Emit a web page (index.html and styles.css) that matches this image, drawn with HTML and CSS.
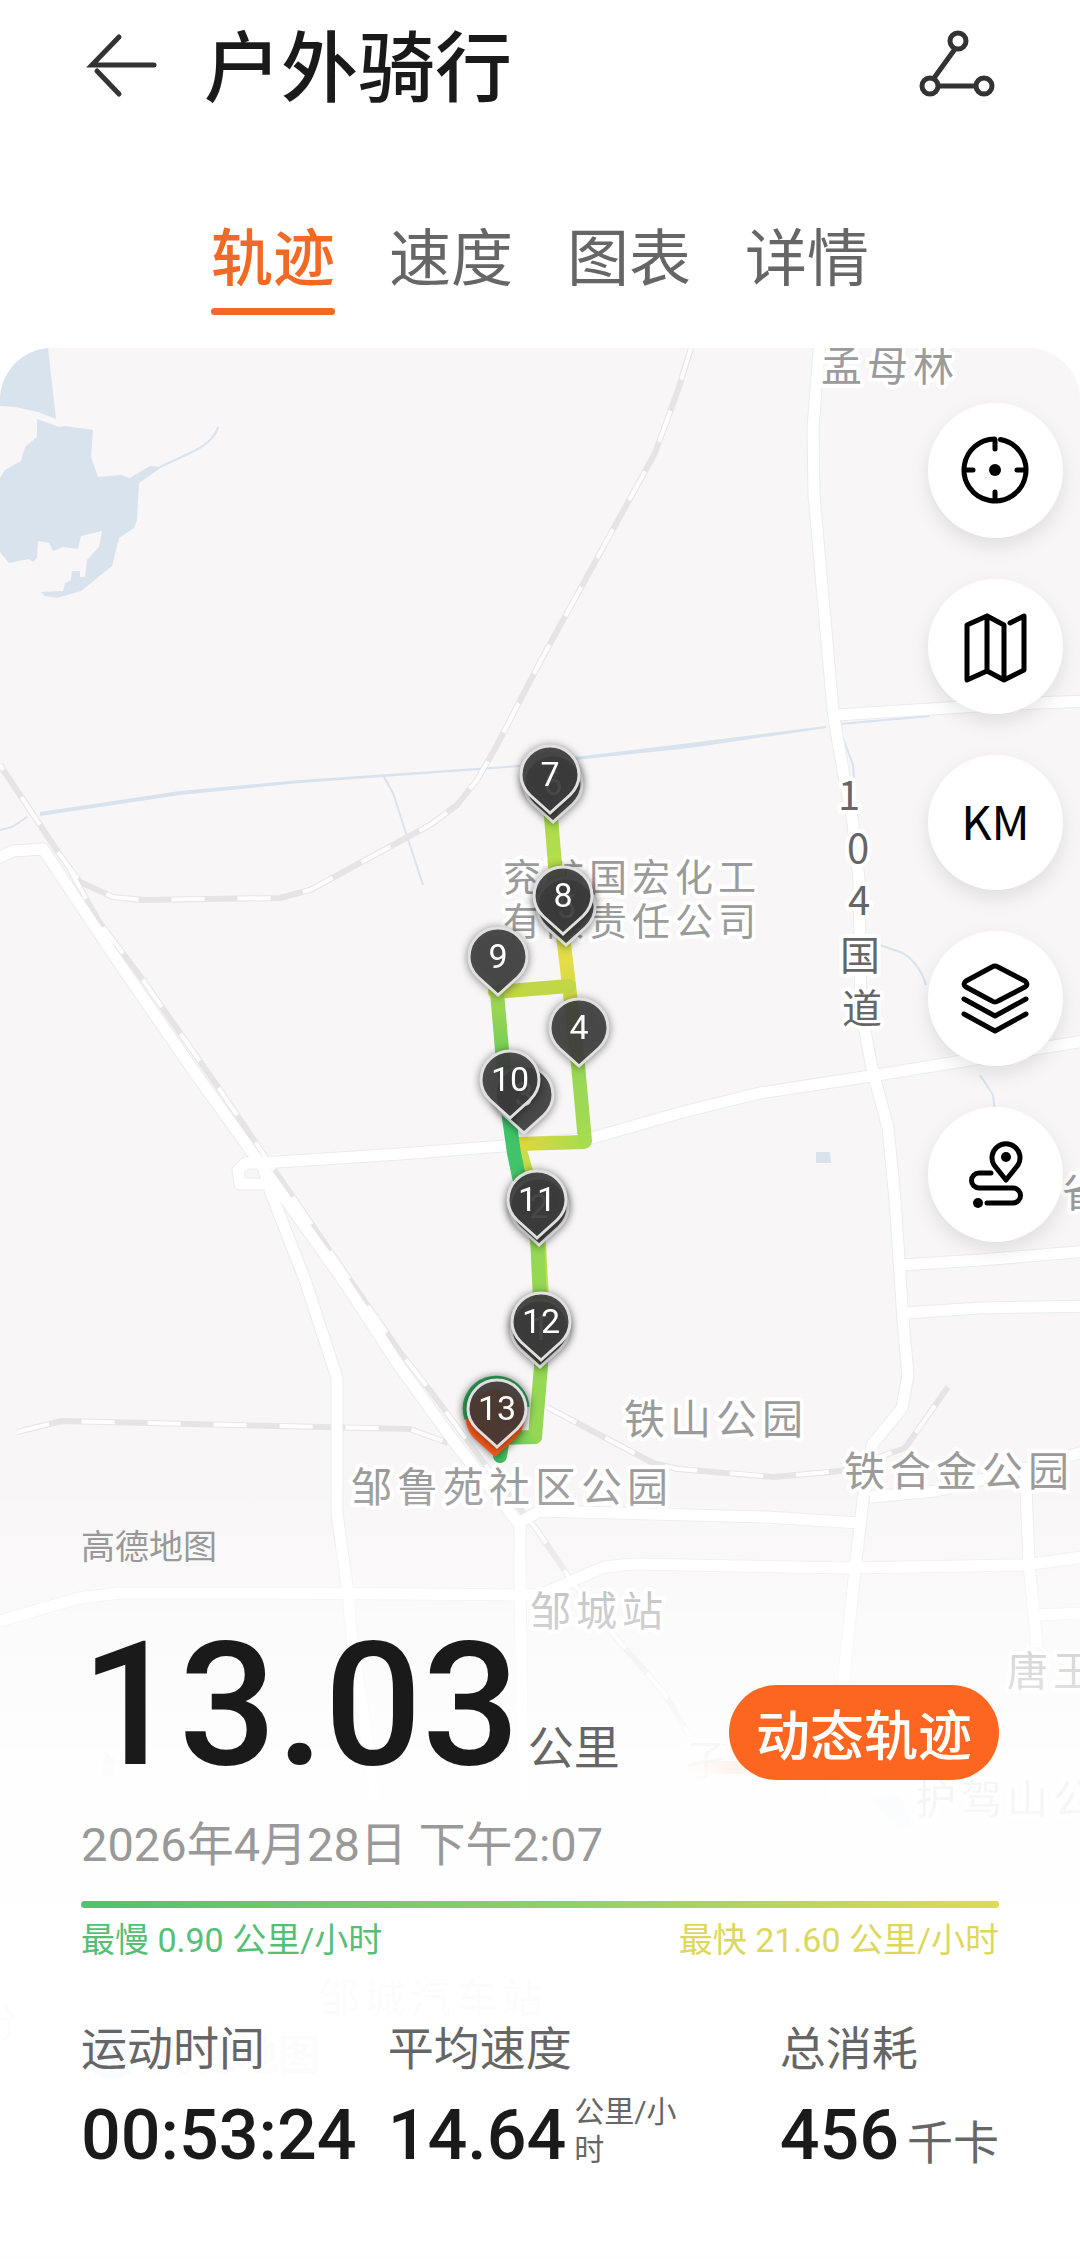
FILE: index.html
```html
<!DOCTYPE html>
<html lang="zh-CN">
<head>
    <meta charset="UTF-8">
    <meta name="viewport" content="width=device-width, initial-scale=1.0">
    <title>户外骑行</title>
    <link rel="stylesheet" href="styles.css">
</head>
<body>
    <header class="header">
        <button type="button" class="icon-button" aria-label="返回">
            <svg viewBox="0 0 80 80">
                <path d="M38 13L11 41H73M16 47L38 70"/>
            </svg>
        </button>
        <h1 class="title">户外骑行</h1>
        <button type="button" class="icon-button" aria-label="分享">
            <svg viewBox="0 0 80 80">
                <path d="M36 25L15 54M20 62H56"/>
                <circle cx="39" cy="17" r="8"/>
                <circle cx="11" cy="62" r="8"/>
                <circle cx="65" cy="62" r="8"/>
            </svg>
        </button>
    </header>

    <nav class="tabs">
        <a href="#track" class="tab is-active" aria-current="page">轨迹</a>
        <a href="#speed" class="tab">速度</a>
        <a href="#chart" class="tab">图表</a>
        <a href="#detail" class="tab">详情</a>
    </nav>

    <main class="map" id="track">
        <svg class="map-canvas" viewBox="0 348 1080 1911" preserveAspectRatio="xMidYMin slice">
            <defs>
                <g id="roads">
                    <path d="M820 340L813 428L814 495L833 710L836 730L843 770L853 823L859 880L861 1010L872 1068L888 1128L895 1200L899 1260L903 1320L908 1375L902 1408L872 1445L863 1500L855 1570L843 1685L832 1800"/>
                    <path d="M836 715L1010 704L1090 701"/>
                    <path d="M262 1163L400 1154L517 1145L592 1138L683 1112L760 1093L877 1075L957 1062L1090 1040"/>
                    <path d="M-10 862L13 851L43 849L117 960L193 1070L262 1166L343 1280L400 1367L455 1443L520 1525L520 1580L523 1800"/>
                    <path d="M516 1524L540 1511L767 1517L860 1523"/>
                    <path d="M264 1170L271 1193L305 1280L337 1378L337 1513L348 1593L352 1640L376 1800"/>
                    <path d="M264 1163H246L238 1170L240 1184H268Z"/>
                    <path d="M-10 1624L79 1598L120 1593L275 1593L540 1595L604 1567L633 1564L850 1568L1025 1565L1090 1556"/>
                    <path d="M870 1497L936 1491L1020 1470L1090 1450"/>
                    <path d="M1025 1463L1029 1563L1037 1647"/>
                    <path d="M1034 1615L1090 1613"/>
                    <path d="M902 1265L980 1260L1090 1251"/>
                    <path d="M905 1313L980 1308L1090 1306"/>
                </g>
                <g id="rails">
                    <path d="M691 348L678 390L655 453L540 662L496 747L477 780L457 805L430 825L310 890L280 898L143 900L113 897L80 882L60 855L0 765"/>
                    <path d="M70 870L98 920L143 980L220 1090L273 1168L350 1280L400 1352L432 1393L487 1467L537 1530L571 1580L612 1633L664 1693L688 1733"/>
                    <path d="M17 1432L62 1421L410 1429L448 1443"/>
                    <path d="M547 1407L653 1463L678 1469L774 1477L840 1471L905 1448L948 1387"/>
                </g>
                <path id="pin" d="M0 0L-20 -18C-26 -24 -29 -31 -29 -38A29 29 0 0 1 29 -38C29 -31 26 -24 20 -18Z"/>
                <linearGradient id="legNorth" gradientUnits="userSpaceOnUse" x1="0" y1="812" x2="0" y2="1142">
                    <stop offset="0" stop-color="#a9dc4c"/>
                    <stop offset=".3" stop-color="#c0df48"/>
                    <stop offset=".45" stop-color="#e6dc46"/>
                    <stop offset=".6" stop-color="#c4dc4a"/>
                    <stop offset=".8" stop-color="#98d756"/>
                    <stop offset="1" stop-color="#a6dc50"/>
                </linearGradient>
                <linearGradient id="legWest" gradientUnits="userSpaceOnUse" x1="0" y1="990" x2="0" y2="1240">
                    <stop offset="0" stop-color="#a6d94e"/>
                    <stop offset=".22" stop-color="#7ccf58"/>
                    <stop offset=".5" stop-color="#3fc46a"/>
                    <stop offset=".7" stop-color="#3fc46a"/>
                    <stop offset="1" stop-color="#8ed656"/>
                </linearGradient>
                <linearGradient id="legSouth" gradientUnits="userSpaceOnUse" x1="517" y1="0" x2="585" y2="0">
                    <stop offset="0" stop-color="#e3d63c"/>
                    <stop offset="1" stop-color="#a8dc4e"/>
                </linearGradient>
                <linearGradient id="legHome" gradientUnits="userSpaceOnUse" x1="535" y1="1437" x2="498" y2="1457">
                    <stop offset="0" stop-color="#94d854"/>
                    <stop offset="1" stop-color="#3cbc60"/>
                </linearGradient>
                <linearGradient id="glow" x1="0" y1="0" x2="1" y2="0">
                    <stop offset="0" stop-color="#f28a5c" stop-opacity="0"/>
                    <stop offset="1" stop-color="#f28a5c"/>
                </linearGradient>
            </defs>

            <!-- 水域 -->
            <g class="water">
                <path d="M0 348H48L56 419L38 412L15 407L0 406Z"/>
                <path d="M37 419L59 427L64 426L93 430L91 457L98 477L121 475L130 478L150 466L162 467L139 483L137 520L134 528L119 538L112 566L81 591L57 598L45 596L35 586L41 592L63 591L65 583L71 580L72 571H80V577H85L87 560L99 547L102 531L81 536L78 549L63 547L53 551L49 543L38 541L37 558L33 562L29 559L9 563L0 552V478L5 470L21 461L25 447L37 437Z"/>
                <path d="M40 812L180 791L300 780L520 765V767L300 783L180 795L40 816Z"/>
                <path d="M575 757L690 743L826 726V728L690 748L575 760Z"/>
                <path d="M816 1152H830L831 1163H816Z"/>
                <path d="M105 1752L115 1760L112 1776H102Z"/>
                <path d="M870 1800L900 1795L912 1825L898 1830Z"/>
            </g>
            <g class="stream">
                <path d="M160 467L190 453Q214 442 218 427"/>
                <path d="M384 777L393 793L405 830L423 885"/>
                <path d="M0 830L12 827L27 817"/>
                <path d="M840 724L930 716"/>
                <path d="M842 735L853 765L855 790"/>
                <path d="M880 945L903 953Q920 964 926 985"/>
                <path d="M980 1075L993 1095L995 1112"/>
            </g>

            <!-- 道路和铁路 -->
            <use href="#roads" class="road-edge"/>
            <use href="#rails" class="rail"/>
            <use href="#rails" class="rail-dash"/>
            <use href="#roads" class="road"/>

            <!-- 地名 -->
            <g class="place">
                <text x="821" y="381">孟母林</text>
                <text x="624" y="1434">铁山公园</text>
                <text x="844" y="1486">铁合金公园</text>
                <text x="351" y="1502">邹鲁苑社区公园</text>
                <text x="530" y="1626">邹城站</text>
                <text x="1007" y="1686">唐王</text>
                <text x="685" y="1775" opacity=".4">孑</text>
                <text x="915" y="1814">护驾山公</text>
                <text x="318" y="2013">邹城汽车站</text>
                <text x="-24" y="2036">份</text>
                <text x="1062" y="1207">省</text>
            </g>
            <g class="place place-small">
                <text x="503" y="891">兖矿国宏化工</text>
                <text x="503" y="935">有限责任公司</text>
            </g>
            <g class="place road-name">
                <text x="849" y="810">1</text>
                <text x="858" y="863">0</text>
                <text x="859" y="915">4</text>
                <text x="860" y="970">国</text>
                <text x="862" y="1023">道</text>
            </g>
            <g class="watermark">
                <circle cx="112" cy="2054" r="26"/>
                <text x="152" y="2070">高德地图</text>
            </g>

            <!-- 骑行轨迹 -->
            <g class="route">
                <path stroke="#c8dc48" d="M518 1144L530 1185L539 1245L542 1300"/>
                <path stroke="url(#legSouth)" d="M517 1144L584 1142"/>
                <path stroke="url(#legNorth)" d="M550 805L555 865L564 944L569 985L578 1065L585 1141"/>
                <path stroke="#c2d746" d="M569 986L495 992"/>
                <path stroke="url(#legWest)" d="M497 992L502 1050L509 1118L514 1153L519 1177L536 1237"/>
                <path stroke="#94d854" d="M537 1237L540 1300L541 1366L535 1437"/>
                <path stroke="url(#legHome)" d="M535 1437L503 1438L500 1456"/>
            </g>

            <!-- 公里标记 -->
            <g class="pins">
                <g transform="translate(540 1367)"><use href="#pin"/><text y="-27">1</text></g>
                <g transform="translate(539 1245)"><use href="#pin"/><text y="-27">2</text></g>
                <g transform="translate(524 1133)"><use href="#pin"/><text y="-27">3</text></g>
                <g transform="translate(579 1066)"><use href="#pin"/><text y="-27">4</text></g>
                <g transform="translate(566 945)"><use href="#pin"/><text y="-27">5</text></g>
                <g transform="translate(553 822)"><use href="#pin"/><text y="-27">6</text></g>
                <g transform="translate(550 813)"><use href="#pin"/><text y="-27">7</text></g>
                <g transform="translate(563 934)"><use href="#pin"/><text y="-27">8</text></g>
                <g transform="translate(498 995)"><use href="#pin"/><text y="-27">9</text></g>
                <g transform="translate(510 1118)"><use href="#pin"/><text y="-27">10</text></g>
                <g transform="translate(537 1238)"><use href="#pin"/><text y="-27">11</text></g>
                <g transform="translate(541 1360)"><use href="#pin"/><text y="-27">12</text></g>
                <g transform="translate(495 1457)">
                    <use href="#pin" class="pin-end"/>
                    <path class="pin-start" d="M-28 -38A31 31 0 0 1 -24 -66A31 31 0 0 1 32 -50"/>
                </g>
                <g transform="translate(497 1447)" class="pin-last"><use href="#pin"/><text y="-27">13</text></g>
            </g>
            <rect fill="url(#glow)" x="686" y="1761" width="60" height="13"/>
        </svg>

        <div class="tools">
            <button type="button" class="tool" aria-label="定位">
                <svg viewBox="0 0 135 135">
                    <circle cx="67" cy="67" r="31" pathLength="100" stroke-dasharray="97 3" transform="rotate(-80 67 67)"/>
                    <path d="M67 46V37M67 96V89M38 67H45M96 67H89"/>
                    <circle class="dot" cx="67" cy="67" r="6"/>
                </svg>
            </button>
            <button type="button" class="tool" aria-label="地图">
                <svg viewBox="0 0 135 135">
                    <path d="M39 46L59 37L76 46V101L59 92L39 101ZM59 37V92M76 101L96 91V37L82 44"/>
                </svg>
            </button>
            <button type="button" class="tool tool-text">KM</button>
            <button type="button" class="tool" aria-label="图层">
                <svg viewBox="0 0 135 135">
                    <path d="M64 36Q67 34 70 36L97 50Q101 53 97 56L70 70Q67 72 64 70L38 56Q34 53 38 50ZM36 68L67 85L98 68M36 83L67 100L98 83"/>
                </svg>
            </button>
            <button type="button" class="tool" aria-label="路线">
                <svg viewBox="0 0 135 135">
                    <path d="M78 73L66 58A14 14 0 1 1 90 58ZM63 66H51A7 7 0 0 0 51 81H85A7 7 0 0 1 85 96H59"/>
                    <circle class="dot" cx="78" cy="50" r="5"/>
                    <circle class="dot" cx="50" cy="96" r="5"/>
                </svg>
            </button>
        </div>

        <section class="summary">
            <p class="source">高德地图</p>
            <div class="distance-row">
                <p class="distance">13.03 <span class="unit">公里</span></p>
                <button type="button" class="replay">动态轨迹</button>
            </div>
            <p class="date">2026年4月28日 下午2:07</p>
            <div class="speed-bar"></div>
            <div class="speed-range">
                <span class="slowest">最慢 0.90 公里/小时</span>
                <span class="fastest">最快 21.60 公里/小时</span>
            </div>
            <dl class="stats">
                <div class="stat">
                    <dt>运动时间</dt>
                    <dd>00:53:24</dd>
                </div>
                <div class="stat">
                    <dt>平均速度</dt>
                    <dd>14.64<span class="unit-wrap">公里/小时</span></dd>
                </div>
                <div class="stat">
                    <dt>总消耗</dt>
                    <dd>456<span class="unit">千卡</span></dd>
                </div>
            </dl>
        </section>
    </main>
</body>
</html>
```
FILE: styles.css
```css
* {
    box-sizing: border-box;
}
body {
    display: flex;
    flex-direction: column;
    min-height: 100vh;
    margin: 0;
    background-color: #fff;
    color: #1a1a1a;
    font-family: Roboto, "Noto Sans CJK SC", sans-serif;
}
h1, p, dl, dd {
    margin: 0;
}
button {
    padding: 0;
    border: none;
    background: none;
    font-family: inherit;
    cursor: pointer;
}
svg {
    display: block;
}

/* 顶部 */
.header {
    display: flex;
    align-items: center;
    gap: 43px;
    height: 128px;
    padding: 0 81px;
}
.icon-button {
    width: 80px;
    height: 80px;
}
.icon-button svg {
    fill: none;
    stroke: #333;
    stroke-width: 5px;
    stroke-linecap: round;
}
.title {
    flex: 1;
    padding-top: 12px;
    font-size: 77px;
    font-weight: 500;
    line-height: 112px;
}
.tabs {
    display: flex;
    justify-content: center;
    gap: 54px;
    padding: 92px 0 33px;
}
.tab {
    padding-bottom: 8px;
    border-bottom: 7px solid transparent;
    color: #666;
    font-size: 62px;
    line-height: 80px;
    text-decoration: none;
}
.tab.is-active {
    position: relative;
    color: #f06a25;
    font-weight: 500;
}
.tab.is-active::after {
    content: "";
    position: absolute;
    left: 0;
    right: 0;
    bottom: -7px;
    height: 7px;
    border-radius: 4px;
    background-color: #f06a25;
}

/* 地图 */
.map {
    position: relative;
    flex: 1;
    display: flex;
    flex-direction: column;
    justify-content: space-between;
    overflow: hidden;
    border-radius: 52px 52px 0 0;
    background-color: #f8f6f7;
}
.map-canvas {
    position: absolute;
    top: 0;
    left: 0;
    width: 100%;
    height: 100%;
}
.water {
    fill: #d8e3ee;
}
.stream {
    fill: none;
    stroke: #d8e3ee;
    stroke-width: 2px;
}
.road-edge, .road, .rail, .rail-dash {
    fill: none;
    stroke-linejoin: round;
}
.road-edge {
    stroke: #e9eded;
    stroke-width: 13px;
}
.road {
    stroke: #fff;
    stroke-width: 11px;
}
.rail {
    stroke: #e6e4e5;
    stroke-width: 6px;
}
.rail-dash {
    stroke: #fff;
    stroke-width: 4px;
    stroke-dasharray: 33px 33px;
}
.place {
    fill: #9b9b9b;
    stroke: #fff;
    stroke-width: 8px;
    stroke-linejoin: round;
    paint-order: stroke;
    font-size: 41px;
    letter-spacing: 5px;
}
.place-small {
    font-size: 38px;
}
.road-name {
    fill: #666;
    font-family: "Noto Sans CJK SC", sans-serif;
    font-size: 40px;
    letter-spacing: 0;
    text-anchor: middle;
}
.watermark {
    fill: #999;
    font-size: 42px;
    font-weight: 700;
}
.watermark circle {
    fill: #4f9df5;
}
.route {
    fill: none;
    stroke-width: 14px;
    stroke-linecap: round;
    stroke-linejoin: round;
}
.pins > g {
    filter: drop-shadow(0 1px 4px rgba(0, 0, 0, 0.5));
}
.pins use {
    fill: rgba(62, 62, 62, 0.88);
    stroke: #e0e0e0;
    stroke-width: 3px;
}
.pins text {
    fill: #fff;
    font-size: 34px;
    text-anchor: middle;
}
.pins .pin-end {
    fill: #f4581c;
    stroke: none;
}
.pins .pin-start {
    fill: none;
    stroke: #2b9a54;
    stroke-width: 5px;
}
.pins .pin-last use {
    fill: rgba(66, 58, 56, 0.88);
}

/* 地图按钮 */
.tools {
    position: relative;
    display: flex;
    flex-direction: column;
    align-self: flex-end;
    gap: 41px;
    padding: 55px 17px;
}
.tool {
    width: 135px;
    height: 135px;
    border-radius: 50%;
    background-color: #fff;
    box-shadow: 0 8px 20px rgba(0, 0, 0, 0.1);
}
.tool svg {
    fill: none;
    stroke: #000;
    stroke-width: 5px;
    stroke-linecap: round;
    stroke-linejoin: round;
}
.tool .dot {
    fill: #000;
    stroke: none;
}
.tool-text {
    padding-bottom: 6px;
    color: #000;
    font-family: "Noto Sans CJK SC", sans-serif;
    font-size: 47px;
}

/* 运动数据 */
.summary {
    position: relative;
    padding: 42px 81px 82px;
    background: linear-gradient(rgba(255, 255, 255, 0), rgba(255, 255, 255, 0.5) 17%, rgba(255, 255, 255, 0.9) 38%, rgba(255, 255, 255, 0.97) 60%);
}
.source {
    color: #999;
    font-size: 34px;
    line-height: 50px;
}
.distance-row {
    display: flex;
    align-items: center;
    justify-content: space-between;
    margin-top: 47px;
}
.distance {
    display: flex;
    align-items: baseline;
    gap: 8px;
    font-size: 172px;
    font-weight: 500;
    line-height: 172px;
}
.unit {
    color: #666;
    font-size: 46px;
    font-weight: 400;
    line-height: 60px;
}
.replay {
    width: 270px;
    height: 95px;
    margin-top: 55px;
    padding-top: 10px;
    border-radius: 48px;
    background-color: #fc6621;
    color: #fff;
    font-size: 54px;
    font-weight: 500;
    line-height: 85px;
}
.date {
    margin-top: 22px;
    color: #999;
    font-size: 47px;
    line-height: 64px;
}
.speed-bar {
    height: 7px;
    margin-top: 24px;
    border-radius: 4px;
    background: linear-gradient(to right, #4fc36e, #8fcf66 50%, #dfdb55);
}
.speed-range {
    display: flex;
    justify-content: space-between;
    margin-top: 8px;
    font-size: 34px;
    line-height: 48px;
}
.slowest {
    color: #55bf75;
}
.fastest {
    color: #dcd85c;
}
.stats {
    display: grid;
    grid-template-columns: auto 1fr auto;
    gap: 31px;
    margin-top: 55px;
}
.stat dt {
    color: #666;
    font-size: 46px;
    line-height: 60px;
}
.stat dd {
    display: flex;
    align-items: baseline;
    gap: 8px;
    margin-top: 14px;
    font-size: 70px;
    font-weight: 500;
    line-height: 84px;
}
.unit-wrap {
    align-self: flex-start;
    width: 108px;
    color: #666;
    font-size: 30px;
    font-weight: 400;
    line-height: 38px;
    word-break: break-all;
}
```
